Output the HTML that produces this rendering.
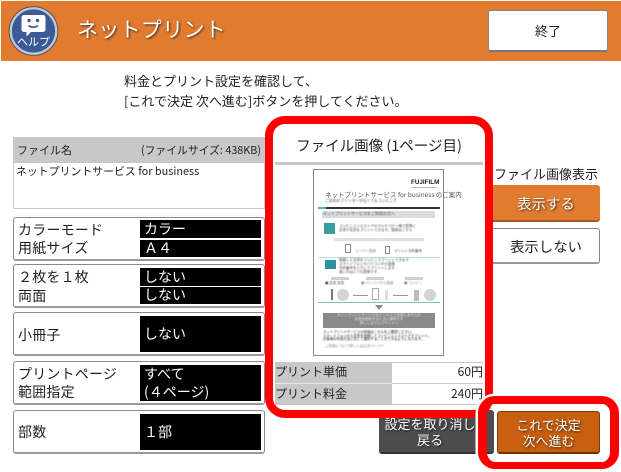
<!DOCTYPE html>
<html lang="ja"><head><meta charset="utf-8"><style>
html,body{margin:0;padding:0;background:#fff}
#p{position:relative;width:621px;height:472px;overflow:hidden;background:#fff;font-family:"Noto Sans CJK JP","Liberation Sans",sans-serif;color:#222}
#p div{position:absolute;box-sizing:border-box;white-space:nowrap}
.t{font-size:13px;line-height:18px}
.row{left:13px;width:252px;height:44px;border:1px solid #8a8a8a;border-bottom:2px solid #999;border-radius:3px;background:#fff}
.lab{left:18px;font-size:14px;line-height:20px;color:#222;letter-spacing:.2px}
.blk{left:140px;width:121px;background:#000;color:#fff;font-size:14px;line-height:18px;padding-left:4px}
.b{border-radius:3px;text-align:center}
.s{text-shadow:1px 1px 2px rgba(0,0,0,.7);color:#fff}
.tx{font-size:4px;line-height:5px;color:#444;filter:blur(.45px)}
</style></head><body><div id="p">

<div style="left:1px;top:1px;width:620px;height:60px;background:#e07b30"></div>
<svg style="position:absolute;left:8px;top:6px" width="52" height="52" viewBox="0 0 52 52">
<circle cx="25.5" cy="25" r="22.8" fill="#3b5a98" stroke="#c4c8d0" stroke-width="2.4"/>
<circle cx="25.5" cy="25" r="24.4" fill="none" stroke="#55555c" stroke-width="1"/>
<path d="M16 9h19a2.500 2.500 0 0 1 2.500 2.500v12a2.500 2.500 0 0 1-2.500 2.500H23l-4.500 4.500v-4.500H16a2.500 2.500 0 0 1-2.500-2.500v-12A2.500 2.500 0 0 1 16 9z" fill="#fff"/>
<circle cx="21" cy="14.500" r="1.700" fill="#3b5a98"/><circle cx="29.500" cy="14.500" r="1.700" fill="#3b5a98"/>
<path d="M20.500 19.500q4.800 3.500 9.500 0" fill="none" stroke="#3b5a98" stroke-width="1.700"/>
<text x="25.500" y="39.500" text-anchor="middle" font-size="11" fill="#fff" font-family="Noto Sans CJK JP,sans-serif">ヘルプ</text>
</svg>
<div class="s" style="left:77px;top:12px;font-size:21px;line-height:34px;letter-spacing:.3px">ネットプリント</div>
<div class="b" style="left:488px;top:10px;width:120px;height:42px;background:#fff;border:1px solid #888;border-bottom:2px solid #777;font-size:13px;line-height:40px">終了</div>

<div class="t" style="left:124px;top:72px">料金とプリント設定を確認して、</div>
<div class="t" style="left:124px;top:92px">[これで決定 次へ進む]ボタンを押してください。</div>

<div style="left:13px;top:137px;width:252px;height:72px;border:1px solid #c8c8c8;background:#fff"></div>
<div style="left:13px;top:137px;width:252px;height:26px;background:#c8c8c8"></div>
<div style="left:17px;top:141px;font-size:11px;line-height:18px">ファイル名</div>
<div style="left:141px;top:141px;font-size:10.800px;line-height:18px">(ファイルサイズ: 438KB)</div>
<div style="left:16px;top:163px;font-size:10.900px;line-height:17px">ネットプリントサービス for business</div>

<div class="row" style="top:217px"></div>
<div class="lab" style="top:220px">カラーモード</div><div class="lab" style="top:238px">用紙サイズ</div>
<div class="blk" style="top:220px;height:18px">カラー</div><div class="blk" style="top:240px;height:17px;line-height:17px"> Ａ４</div>

<div class="row" style="top:264px"></div>
<div class="lab" style="top:267px">２枚を１枚</div><div class="lab" style="top:286px">両面</div>
<div class="blk" style="top:268px;height:18px">しない</div><div class="blk" style="top:287px;height:17px;line-height:17px">しない</div>

<div class="row" style="top:312px"></div>
<div class="lab" style="top:325px">小冊子</div>
<div class="blk" style="top:316px;height:36px;line-height:36px">しない</div>

<div class="row" style="top:361px"></div>
<div class="lab" style="top:364px">プリントページ</div><div class="lab" style="top:382px">範囲指定</div>
<div class="blk" style="top:365px;height:36px">すべて<br>(４ページ)</div>

<div class="row" style="top:410px"></div>
<div class="lab" style="top:422px">部数</div>
<div class="blk" style="top:414px;height:36px;line-height:36px">１部</div>

<div class="b" style="left:379px;top:410px;width:115px;height:44px;background:#4d4d4d;border-bottom:2px solid #333"></div>
<div class="s" style="left:384px;top:416px;font-size:13px;line-height:16px;width:92px;text-align:center">設定を取り消し<br>戻る</div>

<div class="b s" style="left:497px;top:411px;width:103px;height:43px;background:#c85f0e;border:1px solid #7a4010;border-bottom:2px solid #6a3808;font-size:13px;line-height:15.500px;padding-top:5px">これで決定<br>次へ進む</div>

<div class="t" style="left:494px;top:165px">ファイル画像表示</div>
<div class="b s" style="left:480px;top:185px;width:120px;height:37px;background:#e07b30;border-bottom:2px solid #a85a20;font-size:14.400px;line-height:37px;padding-left:12px">表示する</div>
<div class="b" style="left:480px;top:228px;width:120px;height:36px;background:#fff;border:1px solid #888;border-bottom:2px solid #999;font-size:14.400px;line-height:35px;padding-left:12px">表示しない</div>

<!-- panel -->
<div style="left:265px;top:116px;width:228px;height:302px;border:8px solid #f00;border-radius:20px;background:#fff"></div>
<div style="left:275px;top:136px;width:208px;text-align:center;font-size:14.500px;line-height:20px">ファイル画像 (1ページ目)</div>
<div style="left:275px;top:162px;width:208px;height:3px;background:#c8c8c8"></div>

<div style="left:313px;top:169px;width:131px;height:187px;border:1px solid #888;background:#fff"></div>
<div style="left:411px;top:179px;font:bold 6.300px/8px 'Liberation Sans',sans-serif;color:#222;filter:blur(.3px)">FUJIFILM</div>
<div style="left:411px;top:187px;width:26px;height:1px;background:#bbb"></div>
<div class="tx" style="left:325px;top:190px;font-size:6.500px;line-height:8px;color:#555;filter:blur(.35px)">ネットプリントサービス for business のご案内</div>
<div class="tx" style="left:325px;top:198.500px;font-size:3.800px">ご自宅のプリンターがなくてもコンビニで</div>
<div style="left:318px;top:207px;width:122px;height:2px;background:#333"></div>
<div style="left:318px;top:207px;width:8px;height:2px;background:#4bb8b8"></div>
<div style="left:322px;top:211px;width:113px;height:7px;background:#dcdcdc"></div>
<div class="tx" style="left:323px;top:212px">ネットプリントサービスをご利用の方へ</div>
<div style="left:324px;top:223px;width:11px;height:11px;background:#3d9c9c"></div>
<div class="tx" style="left:339px;top:224px;font-size:3.500px">コンビニエンスストアのマルチコピー機で簡単に</div>
<div class="tx" style="left:339px;top:228px;font-size:3.500px">文書や写真をプリントできます。登録はこちら</div>
<div style="left:334px;top:238px;width:90px;height:3px;background:#e0e0e0"></div>
<div style="left:345px;top:244px;width:6px;height:9px;border:1px solid #888"></div>
<div class="tx" style="left:355px;top:249px;font-size:3.500px;color:#888">ユーザー登録</div>
<div style="left:385px;top:246px;width:5px;height:8px;border:1px solid #888"></div>
<div class="tx" style="left:394px;top:249px;font-size:3.500px">プリント予約番号</div>
<div style="left:318px;top:257px;width:122px;height:1px;background:#b8e0e0"></div>
<div style="left:325px;top:260px;width:11px;height:9px;background:#2f8f9f"></div>
<div class="tx" style="left:339px;top:259px;line-height:4px;font-size:3.500px">登録した文書をコンビニでプリントできます<br>スマートフォンやパソコンから登録<br>予約番号を入力してプリントします<br>使い方はとても簡単です</div>
<div style="left:331px;top:277px;width:18px;height:3px;background:#d0d0d0"></div>
<div style="left:366px;top:277px;width:18px;height:3px;background:#d0d0d0"></div>
<div style="left:405px;top:277px;width:18px;height:3px;background:#d0d0d0"></div>
<div class="tx" style="left:325px;top:281px;font-size:3.500px">● 文書 写真</div>
<div class="tx" style="left:361px;top:281px;font-size:3.500px;color:#888">● パソコンから登録</div>
<div class="tx" style="left:404px;top:281px;font-size:3.500px;color:#888">● コンビニ</div>
<div style="left:331px;top:289px;width:2px;height:11px;background:#777"></div>
<div style="left:337px;top:289px;width:12px;height:12px;border-radius:50%;background:#d4d4d4"></div>
<div style="left:353px;top:295px;width:15px;height:1px;background:#999"></div>
<div style="left:372px;top:288px;width:7px;height:12px;border:1px solid #aaa"></div>
<div style="left:385px;top:290px;width:3px;height:10px;background:#ddd"></div>
<div style="left:393px;top:295px;width:15px;height:1px;background:#999"></div>
<div style="left:414px;top:290px;width:5px;height:11px;background:#bbb"></div>
<div style="left:424px;top:289px;width:12px;height:12px;border-radius:50%;background:#d4d4d4"></div>
<div style="left:318px;top:302px;width:122px;height:1px;background:#7cc0c0"></div>
<svg style="position:absolute;left:375px;top:305px" width="8" height="5"><path d="M0 0h8L4 5z" fill="#888"/></svg>
<div style="left:323px;top:313px;width:112px;height:15px;background:#8a8a8a"></div>
<div class="tx" style="left:325px;top:314px;line-height:4.200px;font-size:3.500px;color:#eee;width:108px;text-align:center">ネットプリントサービスをビジネスで活用しませんか<br>文書を配布するときに便利です<br>詳しくはウェブサイトへ</div>
<div class="tx" style="left:323px;top:330px;line-height:3.500px;font-size:3.400px;color:#222">ネットプリントサービスの詳細はこちらをご確認ください。<br>スマートフォンから文書を登録してコンビニエンスストアでプリント。<br>お客様の利用方法に応じて選択することができるようになります。</div>
<div class="tx" style="left:325px;top:344px;font-size:3.500px;color:#777">ご利用について詳しくは公式ページへ</div>

<div style="left:275px;top:362px;width:208px;height:1px;background:#c8c8c8"></div>
<div style="left:275px;top:363px;width:117px;height:41px;background:#c8c8c8"></div>
<div style="left:392px;top:383px;width:91px;height:1px;background:#ccc"></div>
<div style="left:275px;top:383px;width:117px;height:1px;background:#e8e8e8"></div>
<div style="left:275px;top:404px;width:208px;height:1px;background:#c8c8c8"></div>
<div style="left:275px;top:363px;font-size:12px;line-height:18px">プリント単価</div>
<div style="left:275px;top:385px;font-size:12px;line-height:18px">プリント料金</div>
<div style="right:138px;top:363px;font-size:12px;line-height:18px">60円</div>
<div style="right:138px;top:385px;font-size:12px;line-height:18px">240円</div>

<div style="left:478px;top:396px;width:141px;height:73px;border:solid #f00;border-width:8px 9px 7px 9px;border-radius:17px;box-shadow:0 0 0 2.500px #fff"></div>
</div></body></html>
